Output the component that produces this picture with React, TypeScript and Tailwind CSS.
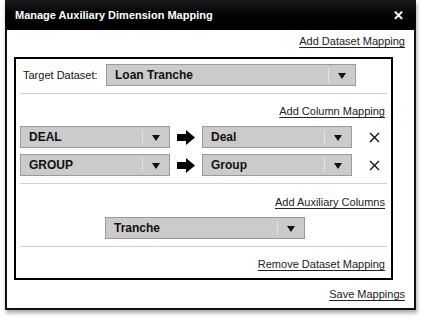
import React from 'react';

const font = { fontFamily: '"Liberation Sans", Arial, sans-serif' };

function Caret() {
    return (
        <svg width="8" height="6" viewBox="0 0 8 6" className="block">
            <polygon points="0,0 8,0 4,6" fill="#111" />
        </svg>
    );
}

function Select({ label, className }: { label: string; className: string }) {
    return (
        <div className={`flex h-[22px] items-center bg-[#cbcbcb] border border-[#9a9a9a] ${className}`}>
            <span className="flex-1 pl-[8px] text-[12px] font-bold text-[#111] leading-none">{label}</span>
            <span className="h-[14px] border-l border-[#e4e4e4]" />
            <span className="w-[26px] flex justify-center pt-[2px]">
                <Caret />
            </span>
        </div>
    );
}

function Arrow() {
    return (
        <svg width="18" height="15" viewBox="0 0 18 15" className="block">
            <polygon points="0,4 9,4 9,0 18,7.5 9,15 9,11 0,11" fill="#000" />
        </svg>
    );
}

function RemoveIcon() {
    return (
        <svg width="11" height="11" viewBox="0 0 11 11" className="block">
            <path d="M1 1 L10 10 M10 1 L1 10" stroke="#111" strokeWidth="1.4" />
        </svg>
    );
}

function Link({ children }: { children: React.ReactNode }) {
    return <span className="text-[11px] text-[#222] underline underline-offset-[2px] leading-none">{children}</span>;
}

function MappingRow({ from, to }: { from: string; to: string }) {
    return (
        <div className="flex items-center">
            <Select label={from} className="w-[150px]" />
            <div className="w-[32px] flex justify-center">
                <Arrow />
            </div>
            <Select label={to} className="w-[150px]" />
            <span className="ml-[17px]">
                <RemoveIcon />
            </span>
        </div>
    );
}

export default function App() {
    return (
        <div className="w-[422px] h-[324px] bg-white" style={font}>
            <div className="ml-[5px] w-[411px] shadow-[1px_3px_4px_rgba(0,0,0,0.35)]">
                {/* Title bar */}
                <div className="h-[30px] bg-gradient-to-b from-[#1a1a1a] to-[#000] flex items-center px-[10px]">
                    <span className="flex-1 text-white font-bold text-[11px]">Manage Auxiliary Dimension Mapping</span>
                    <span className="text-white font-bold text-[13px] leading-none mr-[2px]">✕</span>
                </div>

                <div className="border-x-2 border-b-2 border-[#111] bg-white pl-[7px] pr-[9px] pb-[8px]">
                    <div className="flex justify-end pt-[6px] h-[27px]">
                        <Link>Add Dataset Mapping</Link>
                    </div>

                    {/* Dataset mapping box */}
                    <div className="w-[379px] border-2 border-black px-[4px]">
                        <div className="flex items-start h-[34px] pt-[5px]">
                            <span className="w-[86px] pl-[3px] pt-[3px] text-[11px] text-[#111]">Target Dataset:</span>
                            <Select label="Loan Tranche" className="w-[250px]" />
                        </div>
                        <div className="border-t border-[#d0d0d0]" />

                        <div className="flex justify-end pr-[2px] pt-[12px] h-[32px]">
                            <Link>Add Column Mapping</Link>
                        </div>
                        <div className="flex flex-col gap-[6px]">
                            <MappingRow from="DEAL" to="Deal" />
                            <MappingRow from="GROUP" to="Group" />
                        </div>
                        <div className="mt-[7px] border-t border-[#d0d0d0]" />

                        <div className="flex justify-end pr-[2px] pt-[13px] h-[33px]">
                            <Link>Add Auxiliary Columns</Link>
                        </div>
                        <div className="flex justify-center pl-[3px]">
                            <Select label="Tranche" className="w-[200px]" />
                        </div>
                        <div className="mt-[7px] border-t border-[#d0d0d0]" />

                        <div className="flex justify-end pr-[2px] pt-[12px] h-[31px]">
                            <Link>Remove Dataset Mapping</Link>
                        </div>
                    </div>

                    <div className="flex justify-end pt-[9px]">
                        <Link>Save Mappings</Link>
                    </div>
                </div>
            </div>
        </div>
    );
}
